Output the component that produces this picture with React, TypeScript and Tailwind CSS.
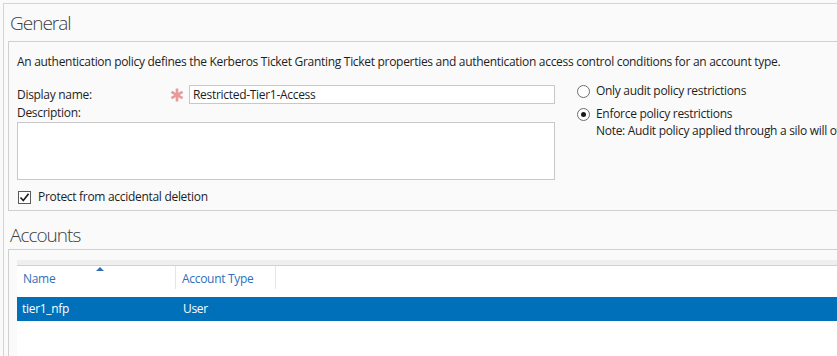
import React from "react";

const font = { fontFamily: '"Open Sans", "Noto Sans", Arial, sans-serif' };

function Asterisk() {
  return (
    <svg width="14" height="14" viewBox="0 0 14 14" className="shrink-0">
      <g stroke="#e99a9a" strokeWidth="2.6" strokeLinecap="butt">
        <line x1="7" y1="0.5" x2="7" y2="13.5" />
        <line x1="1.4" y1="3.8" x2="12.6" y2="10.2" />
        <line x1="1.4" y1="10.2" x2="12.6" y2="3.8" />
      </g>
    </svg>
  );
}

function Radio({ checked }: { checked?: boolean }) {
  return (
    <span className="w-[13px] h-[13px] rounded-full border border-[#6d6d6d] bg-white flex items-center justify-center shrink-0">
      {checked && <span className="w-[5px] h-[5px] rounded-full bg-[#1a1a1a]" />}
    </span>
  );
}

function Checkbox() {
  return (
    <span className="w-[13px] h-[13px] border border-[#5a5a5a] bg-white flex items-center justify-center shrink-0">
      <svg width="11" height="11" viewBox="0 0 11 11">
        <path d="M1.5 5.5 L4.3 8.5 L9.6 1.8" fill="none" stroke="#1f1f1f" strokeWidth="1.7" />
      </svg>
    </span>
  );
}

export default function App() {
  return (
    <div
      className="w-[837px] h-[356px] bg-[#fafafa] overflow-hidden pt-[3px] pl-[3px] text-[12px] tracking-[-0.3px] text-[#1e1e1e]"
      style={font}
    >
      <div className="h-full border-t border-l border-[#d4d4d4] flex flex-col">
        {/* General */}
        <div className="h-[37px] pl-[6px] pt-[7px] text-[19px] leading-[24px] font-light tracking-[-1px] text-[#3c3c3c]">
          General
        </div>
        <div className="ml-[4px] h-[170px] border-t border-l border-b border-[#d0d0d0] pl-[8px] flex flex-col">
          <div className="h-[38px] pt-[12px] leading-[16px] whitespace-nowrap">
            An authentication policy defines the Kerberos Ticket Granting Ticket properties and authentication access
            control conditions for an account type.
          </div>
          <div className="flex">
            <div className="w-[538px] shrink-0 flex flex-col">
              <div className="flex items-center h-[19px] mt-[5px]">
                <span className="w-[153px]">Display name:</span>
                <Asterisk />
                <div className="ml-[5px] flex-1 h-[19px] border border-[#c8c8c8] bg-white pl-[3px] leading-[17px]">
                  Restricted-Tier1-Access
                </div>
              </div>
              <div className="h-[18px] leading-[18px]">Description:</div>
              <div className="h-[58px] border border-[#c8c8c8] bg-white" />
              <div className="flex items-center gap-[7px] mt-[8px] pl-[1px]">
                <Checkbox />
                <span>Protect from accidental deletion</span>
              </div>
            </div>
            <div className="ml-[22px] flex flex-col mt-[2px] whitespace-nowrap">
              <div className="flex items-center gap-[6px] h-[18px]">
                <Radio />
                <span>Only audit policy restrictions</span>
              </div>
              <div className="flex items-center gap-[6px] h-[18px] mt-[5px]">
                <Radio checked />
                <span>Enforce policy restrictions</span>
              </div>
              <div className="pl-[19px] h-[16px] leading-[16px]">
                Note: Audit policy applied through a silo will override this setting.
              </div>
            </div>
          </div>
        </div>

        {/* Accounts */}
        <div className="h-[38px] pl-[6px] pt-[12px] text-[19px] leading-[24px] font-light tracking-[-1px] text-[#3c3c3c]">
          Accounts
        </div>
        <div className="ml-[4px] flex-1 border-t border-l border-[#d0d0d0] pl-[8px] pt-[10px]">
          <div className="h-[6px] bg-[#efefef] border-b border-[#d0d0d0]" />
          <div className="bg-white h-full">
            <div className="relative flex h-[23px] items-center text-[#2f6fba]">
              <span className="absolute left-[79px] top-[1px] w-0 h-0 border-l-[4px] border-r-[4px] border-b-[4px] border-l-transparent border-r-transparent border-b-[#2f6fba]" />
              <div className="w-[159px] pl-[6px] h-full flex items-center pt-[2px] border-r border-[#e6e6e6]">Name</div>
              <div className="w-[100px] pl-[6px] h-full flex items-center pt-[2px] border-r border-[#e6e6e6]">
                Account Type
              </div>
            </div>
            <div className="flex h-[24px] mt-[8px] items-center bg-[#0070bb] text-white">
              <div className="w-[160px] pl-[5px]">tier1_nfp</div>
              <div className="pl-[6px]">User</div>
            </div>
          </div>
        </div>
      </div>
    </div>
  );
}
